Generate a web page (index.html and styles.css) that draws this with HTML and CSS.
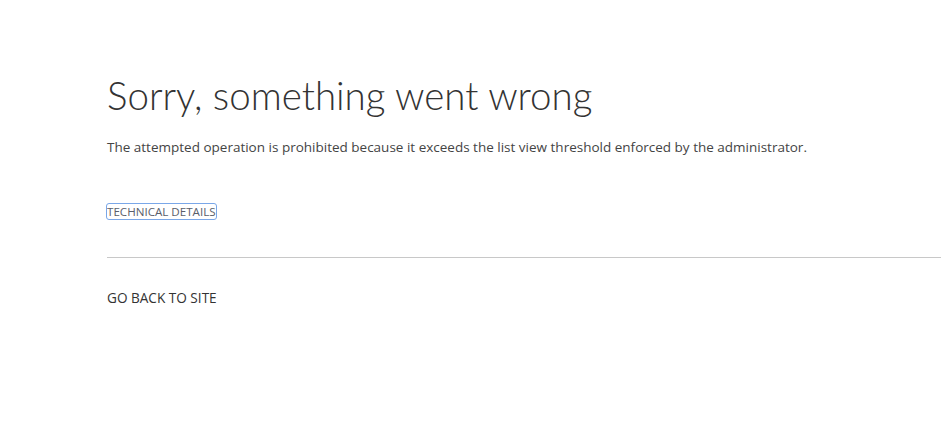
FILE: index.html
```html
<!DOCTYPE html>
<html>
<head>
<meta charset="utf-8">
<link rel="stylesheet" href="styles.css">
</head>
<body>
<div class="page">
  <h1 class="title">Sorry, something went wrong</h1>
  <p class="message">The attempted operation is prohibited because it exceeds the list view threshold enforced by the administrator.</p>
  <div class="details"><a class="details-link" href="#">TECHNICAL DETAILS</a></div>
  <hr class="divider">
  <div class="back"><a class="back-link" href="#">GO BACK TO SITE</a></div>
</div>
</body>
</html>
```
FILE: styles.css
```css
html, body {
  margin: 0;
  padding: 0;
  background: #ffffff;
}
.page {
  padding: 68px 0 0 107px;
  font-family: "Open Sans", "Liberation Sans", sans-serif;
}
.title {
  margin: 0;
  font-family: Lato, "Open Sans", sans-serif;
  font-weight: 300;
  font-size: 38.5px;
  line-height: 54px;
  color: #333333;
}
.message {
  margin: 16px 0 0 0;
  font-size: 13.5px;
  line-height: 18px;
  color: #444444;
}
.details {
  margin-top: 47px;
  line-height: 14px;
}
.details-link {
  display: inline-block;
  font-size: 11.6px;
  color: #5a5e6a;
  text-decoration: none;
  outline: 1px solid #7aa7e8;
  outline-offset: 0;
  border-radius: 2px;
  padding: 0;
  line-height: 15px;
}
.divider {
  margin: 38px 0 0 0;
  border: 0;
  border-top: 1px solid #c8c8c8;
  height: 0;
}
.back {
  margin-top: 28px;
}
.back-link {
  font-size: 13.6px;
  color: #333333;
  text-decoration: none;
}
```
